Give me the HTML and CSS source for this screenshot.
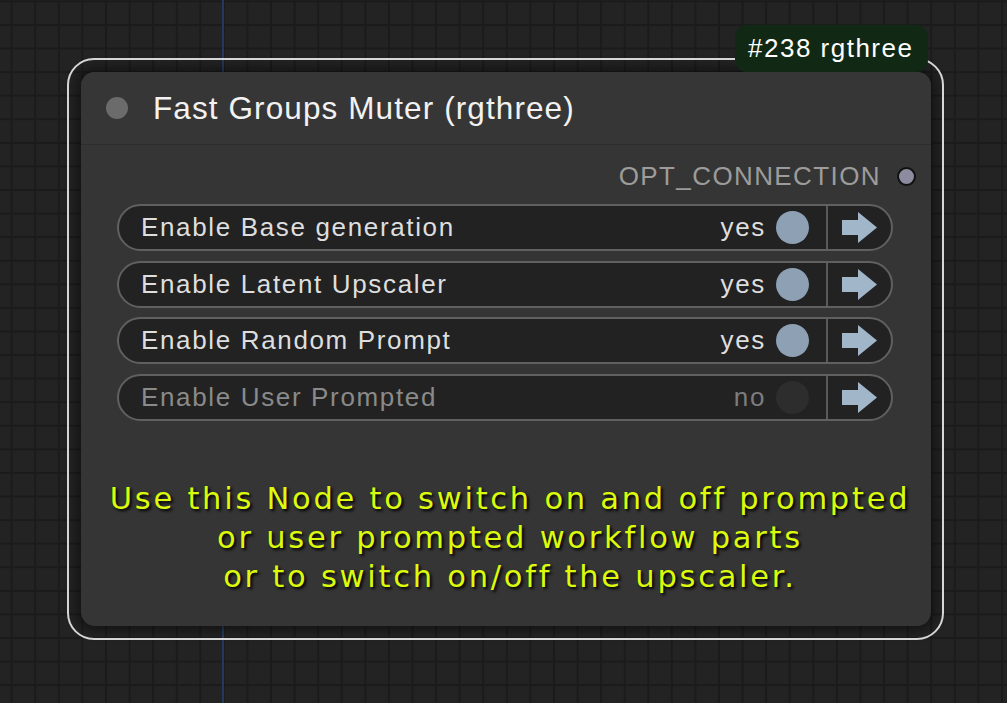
FILE: index.html
```html
<!DOCTYPE html>
<html>
<head>
<meta charset="utf-8">
<link rel="stylesheet" href="styles.css">
</head>
<body>
<div class="canvas">
  <div class="link"></div>
  <div class="node">
    <div class="badge">#238 rgthree</div>
    <div class="title-bar">
      <span class="title-dot"></span>
      <span class="title-text">Fast Groups Muter (rgthree)</span>
    </div>
    <div class="node-body">
      <div class="output-row">
        <span class="output-label">OPT_CONNECTION</span>
        <span class="output-dot"></span>
      </div>
      <div class="widgets">
        <div class="widget">
          <span class="w-label">Enable Base generation</span>
          <span class="w-value">yes</span>
          <span class="w-toggle"></span>
          <span class="w-nav"><svg width="35" height="31" viewBox="0 0 35 31"><polygon points="0,8 16,8 16,0 35,15.5 16,31 16,23 0,23"/></svg></span>
        </div>
        <div class="widget">
          <span class="w-label">Enable Latent Upscaler</span>
          <span class="w-value">yes</span>
          <span class="w-toggle"></span>
          <span class="w-nav"><svg width="35" height="31" viewBox="0 0 35 31"><polygon points="0,8 16,8 16,0 35,15.5 16,31 16,23 0,23"/></svg></span>
        </div>
        <div class="widget">
          <span class="w-label">Enable Random Prompt</span>
          <span class="w-value">yes</span>
          <span class="w-toggle"></span>
          <span class="w-nav"><svg width="35" height="31" viewBox="0 0 35 31"><polygon points="0,8 16,8 16,0 35,15.5 16,31 16,23 0,23"/></svg></span>
        </div>
        <div class="widget off">
          <span class="w-label">Enable User Prompted</span>
          <span class="w-value">no</span>
          <span class="w-toggle"></span>
          <span class="w-nav"><svg width="35" height="31" viewBox="0 0 35 31"><polygon points="0,8 16,8 16,0 35,15.5 16,31 16,23 0,23"/></svg></span>
        </div>
      </div>
      <div class="note">Use this Node to switch on and off prompted<br>or user prompted workflow parts<br>or to switch on/off the upscaler.</div>
    </div>
  </div>
</div>
</body>
</html>
```
FILE: styles.css
```css
html, body {
  margin: 0;
  padding: 0;
}
body {
  background-color: #232323;
  background-image:
    linear-gradient(to right, #1b1b1b 2px, transparent 2px),
    linear-gradient(to bottom, #1b1b1b 2px, transparent 2px);
  background-size: 23.59px 23.59px;
  background-position: 10.7px 0.4px;
  font-family: "Liberation Sans", Arial, sans-serif;
}
.canvas {
  position: relative;
  width: 1007px;
  height: 703px;
  overflow: hidden;
}
.link {
  position: absolute;
  left: 222px;
  top: 0;
  bottom: 0;
  width: 2px;
  background: #25395f;
}
.node {
  position: absolute;
  left: 81px;
  top: 72px;
  width: 850px;
  height: 554px;
  background: #353535;
  border-radius: 14px;
  box-shadow: 0 0 12px 4px rgba(0, 0, 0, 0.45);
  display: flex;
  flex-direction: column;
}
.node::before {
  content: "";
  position: absolute;
  left: -14px;
  top: -14px;
  right: -13px;
  bottom: -14px;
  border: 2px solid #d6d6d6;
  border-radius: 27px;
  pointer-events: none;
}
.badge {
  position: absolute;
  left: 654px;
  top: -47px;
  width: 193px;
  height: 47px;
  box-sizing: border-box;
  padding-left: 13px;
  background: #112914;
  border-radius: 12px;
  color: #ffffff;
  font-size: 26px;
  letter-spacing: 1.5px;
  display: flex;
  align-items: center;
  z-index: 2;
}
.title-bar {
  height: 72px;
  display: flex;
  align-items: center;
  padding-left: 25px;
  background: #363636;
  border-radius: 14px 14px 0 0;
  border-bottom: 1px solid #2d2d2d;
}
.title-dot {
  width: 22px;
  height: 22px;
  border-radius: 50%;
  background: #6b6b6b;
  margin-right: 25px;
}
.title-text {
  color: #f2f2f2;
  font-size: 31.5px;
  letter-spacing: 1.1px;
}
.node-body {
  display: flex;
  flex-direction: column;
  padding-top: 11px;
}
.output-row {
  height: 40px;
  display: flex;
  align-items: center;
  justify-content: flex-end;
  padding-right: 15px;
}
.output-label {
  color: #9c9c9c;
  font-size: 26px;
  letter-spacing: 1.4px;
  margin-right: 16px;
}
.output-dot {
  width: 19px;
  height: 19px;
  box-sizing: border-box;
  border-radius: 50%;
  background: #8d8b9f;
  border: 2px solid #111;
}
.widgets {
  display: flex;
  flex-direction: column;
  gap: 9.67px;
  margin: 8px 38px 0 36px;
}
.widget {
  height: 47px;
  box-sizing: border-box;
  border: 2px solid #606060;
  border-radius: 24px;
  background: #222222;
  display: flex;
  align-items: center;
  font-size: 26px;
  letter-spacing: 1.65px;
  color: #dedede;
}
.w-label {
  flex: 1;
  padding-left: 22px;
  white-space: nowrap;
}
.w-value {
  margin-right: 10px;
}
.w-toggle {
  width: 33px;
  height: 33px;
  border-radius: 50%;
  background: #8da0b4;
  margin-right: 17px;
}
.w-nav {
  align-self: stretch;
  width: 63px;
  border-left: 2px solid #5a5a5a;
  display: flex;
  align-items: center;
  justify-content: center;
}
.w-nav svg {
  display: block;
  fill: #a2b6ca;
}
.widget.off .w-label {
  color: #8a8a8a;
}
.widget.off .w-value {
  color: #7c7c7c;
}
.widget.off .w-toggle {
  background: #2d2d2d;
}
.note {
  margin-top: 58px;
  text-align: center;
  font-family: "DejaVu Sans", Verdana, sans-serif;
  font-size: 30.5px;
  line-height: 39px;
  letter-spacing: 2.75px;
  color: #dcfb0c;
  text-shadow: 2px 2px 3px #000;
  padding-left: 8px;
}
```
